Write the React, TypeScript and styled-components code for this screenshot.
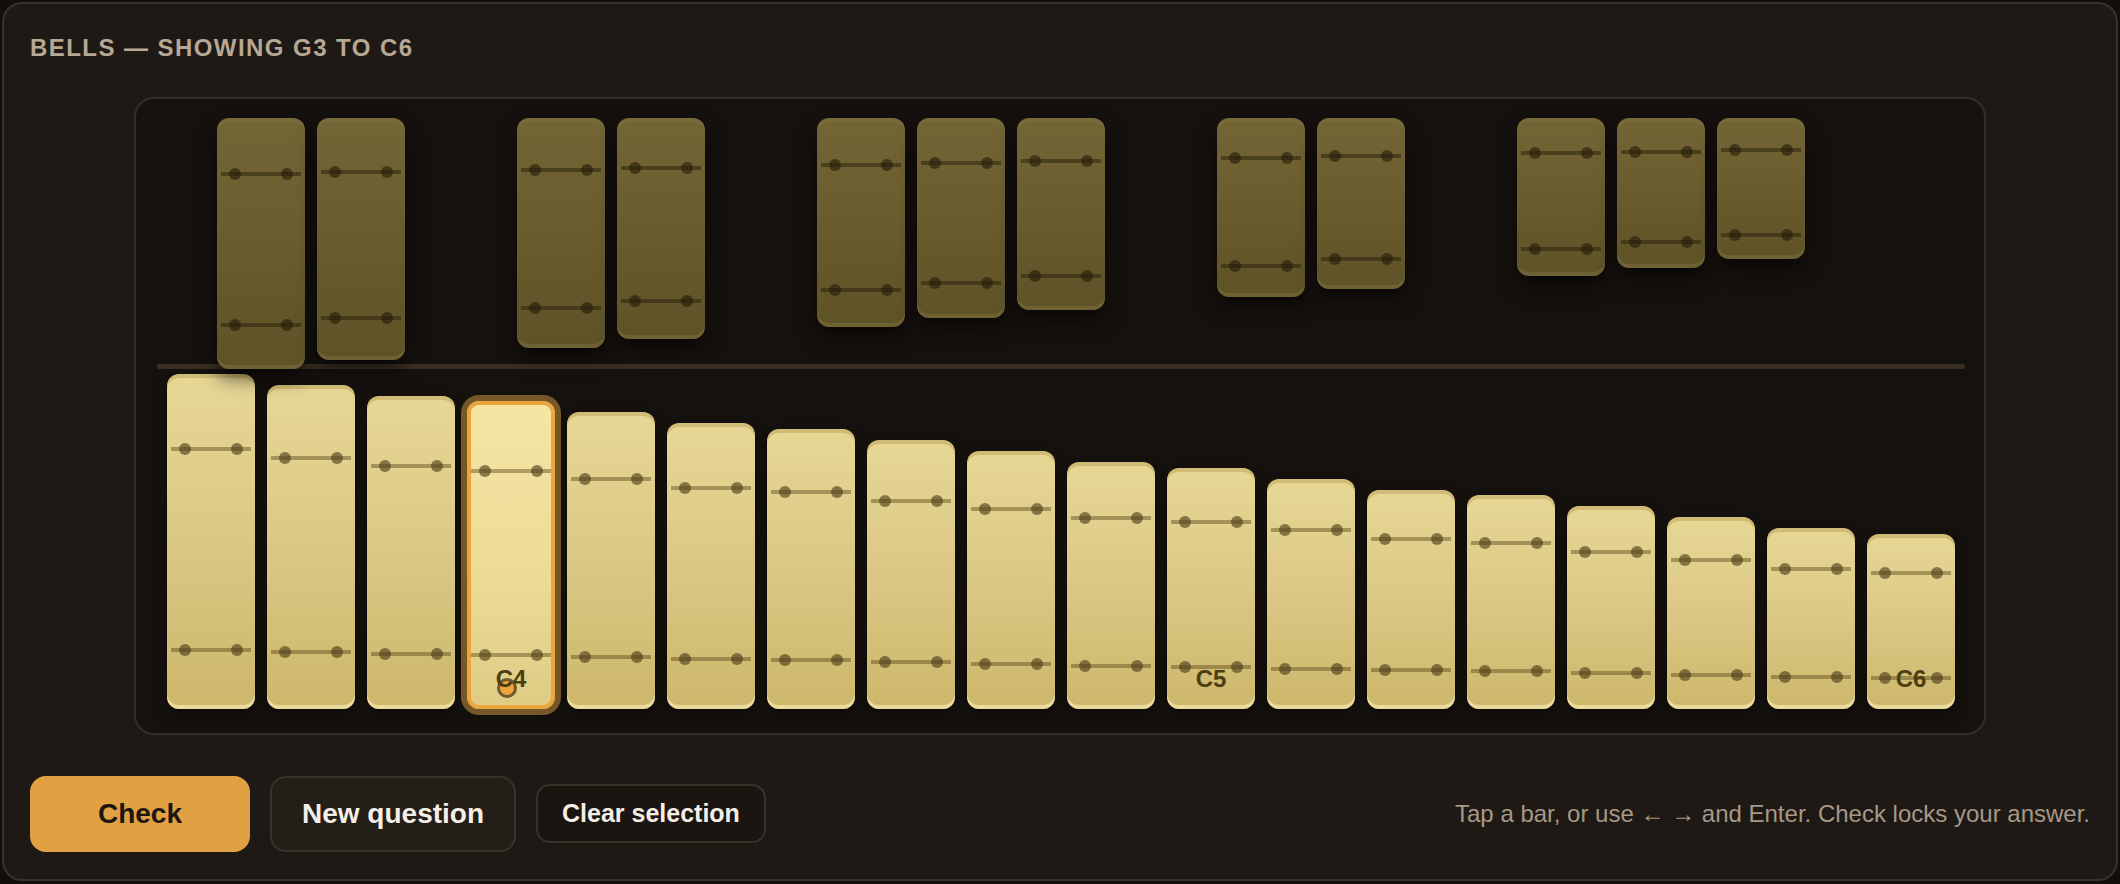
import React from 'react';
import styled, { createGlobalStyle } from 'styled-components';

const GlobalStyle = createGlobalStyle`
  * { box-sizing: border-box; }
  html, body {
    margin: 0;
    background: #110e0b;
  }
  body {
    font-family: 'Liberation Sans', Arial, sans-serif;
  }
`;

const Page = styled.div`
  padding: 2px;
`;

const Card = styled.section`
  display: flex;
  flex-direction: column;
  background: #1e1915;
  border: 2px solid #3a3129;
  border-radius: 20px;
  padding: 30px 26px 27px;
`;

const Title = styled.h2`
  margin: 0 0 34px;
  font-size: 24px;
  line-height: 1.2;
  font-weight: 700;
  letter-spacing: 0.06em;
  text-transform: uppercase;
  color: #b7a893;
`;

const Stage = styled.div`
  align-self: center;
  background: #15110e;
  border: 2px solid #352d25;
  border-radius: 20px;
  padding: 19px 19px 24px 21px;
`;

const SharpRow = styled.div`
  position: relative;
  z-index: 2;
  display: flex;
  align-items: flex-start;
  gap: 12px;
  height: 246px;
  padding-left: 60px;
`;

const Slot = styled.div`
  flex: 0 0 88px;
`;

const Rail = styled.div`
  height: 5px;
  margin-bottom: 5px;
  border-radius: 3px;
  background: #3a2f25;
`;

const NaturalRow = styled.div`
  display: flex;
  align-items: flex-end;
  gap: 12px;
  height: 335px;
  padding: 0 10px;
`;

const Bar = styled.div<{ $sharp?: boolean; $selected?: boolean }>`
  position: relative;
  flex: 0 0 88px;
  border-radius: 12px;
  cursor: pointer;
  background: ${p =>
    p.$sharp
      ? 'linear-gradient(180deg, #746535 0%, #685b2d 55%, #5e5227 100%)'
      : p.$selected
      ? 'linear-gradient(180deg, #f6e6a3 0%, #eddb98 55%, #e0cb84 100%)'
      : 'linear-gradient(180deg, #e7d795 0%, #dac682 55%, #ccb76b 100%)'};
  box-shadow: ${p =>
    p.$sharp
      ? 'inset 0 4px 0 rgba(255, 240, 170, 0.04), inset 0 -4px 0 rgba(255, 235, 160, 0.1), 0 10px 18px rgba(0, 0, 0, 0.55)'
      : p.$selected
      ? 'inset 0 0 0 4px #eaa53d, 0 0 0 6px #765727, 0 6px 12px rgba(0, 0, 0, 0.35)'
      : 'inset 0 4px 0 rgba(150, 120, 40, 0.28), inset 0 -4px 0 rgba(255, 244, 190, 0.6), 0 6px 12px rgba(0, 0, 0, 0.35)'};
`;

const Cord = styled.div<{ $at: number; $sharp?: boolean }>`
  position: absolute;
  left: 4px;
  right: 4px;
  top: calc(${p => p.$at}% - 2px);
  height: 4px;
  background: ${p => (p.$sharp ? 'rgba(40, 32, 10, 0.5)' : 'rgba(90, 70, 25, 0.45)')};

  &::before,
  &::after {
    content: '';
    position: absolute;
    top: -4px;
    width: 12px;
    height: 12px;
    border-radius: 50%;
    background: ${p => (p.$sharp ? 'rgba(35, 28, 8, 0.6)' : 'rgba(75, 60, 22, 0.62)')};
  }
  &::before { left: 8px; }
  &::after { right: 8px; }
`;

const Marker = styled.span`
  position: absolute;
  bottom: 11px;
  left: calc(50% - 14px);
  width: 20px;
  height: 20px;
  border-radius: 50%;
  border: 3px solid #6e5a31;
  background: #eca43b;
`;

const NoteLabel = styled.span`
  position: absolute;
  left: 0;
  right: 0;
  bottom: 16px;
  text-align: center;
  font-size: 24px;
  line-height: 1.15;
  font-weight: 700;
  color: #4d3d12;
`;

const Controls = styled.div`
  display: flex;
  align-items: center;
  gap: 20px;
  margin-top: 41px;
`;

const Button = styled.button<{ $variant: 'primary' | 'secondary' | 'ghost' }>`
  font-family: inherit;
  font-weight: 700;
  cursor: pointer;
  border: 2px solid ${p => (p.$variant === 'primary' ? '#e1a143' : '#3a3129')};
  background: ${p =>
    p.$variant === 'primary' ? '#e1a143' : p.$variant === 'secondary' ? '#241e18' : '#1a1511'};
  color: ${p => (p.$variant === 'primary' ? '#1d1610' : '#f4eee6')};
  height: ${p => (p.$variant === 'ghost' ? '59px' : '76px')};
  min-width: ${p => (p.$variant === 'primary' ? '220px' : '0')};
  padding: ${p => (p.$variant === 'ghost' ? '0 24px' : '0 30px')};
  border-radius: ${p => (p.$variant === 'ghost' ? '14px' : '16px')};
  font-size: ${p => (p.$variant === 'ghost' ? '25px' : '28px')};
`;

const Hint = styled.p`
  margin: 0 0 0 auto;
  font-size: 24px;
  color: #a69886;
`;

const naturals: [string, number][] = [
  ['G3', 0], ['A3', 2], ['B3', 4], ['C4', 5], ['D4', 7], ['E4', 9], ['F4', 10], ['G4', 12], ['A4', 14],
  ['B4', 16], ['C5', 17], ['D5', 19], ['E5', 21], ['F5', 22], ['G5', 24], ['A5', 26], ['B5', 28], ['C6', 29],
];

const barHeight = (semi: number) => 335 - 5.52 * semi;

const selected = 'C4';

const Cords = ({ sharp }: { sharp?: boolean }) => (
  <>
    <Cord $at={22.5} $sharp={sharp} />
    <Cord $at={82.5} $sharp={sharp} />
  </>
);

export default function App() {
  const sharpSlots = naturals.slice(0, -1).map(([name, semi]) => {
    const letter = name[0];
    return letter === 'B' || letter === 'E' ? null : { name: `${letter}#${name.slice(1)}`, semi: semi + 1 };
  });

  return (
    <Page>
      <GlobalStyle />
      <Card>
        <Title>Bells — showing G3 to C6</Title>
        <Stage>
          <SharpRow>
            {sharpSlots.map((s, i) =>
              s ? (
                <Bar key={s.name} $sharp style={{ height: `${0.762 * barHeight(s.semi)}px` }}>
                  <Cords sharp />
                </Bar>
              ) : (
                <Slot key={`gap-${i}`} />
              )
            )}
          </SharpRow>
          <Rail />
          <NaturalRow>
            {naturals.map(([name, semi]) => (
              <Bar key={name} $selected={name === selected} style={{ height: `${barHeight(semi)}px` }}>
                <Cords />
                {name === selected && <Marker />}
                {name.startsWith('C') && <NoteLabel>{name}</NoteLabel>}
              </Bar>
            ))}
          </NaturalRow>
        </Stage>
        <Controls>
          <Button $variant="primary">Check</Button>
          <Button $variant="secondary">New question</Button>
          <Button $variant="ghost">Clear selection</Button>
          <Hint>Tap a bar, or use ← → and Enter. Check locks your answer.</Hint>
        </Controls>
      </Card>
    </Page>
  );
}
